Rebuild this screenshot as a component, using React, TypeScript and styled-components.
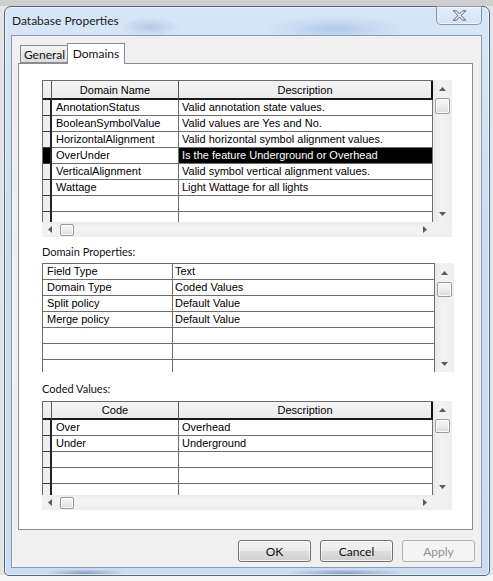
import React from "react";
import styled, { createGlobalStyle, css } from "styled-components";

const UI_FONT = `"Lato", "Liberation Sans", sans-serif`;
const GRID_FONT = `"Liberation Sans", Arial, sans-serif`;

const GlobalStyle = createGlobalStyle`
  html, body { margin: 0; padding: 0; }
  body {
    width: 493px;
    height: 581px;
    overflow: hidden;
    background: #e6e6e6;
  }
`;

/* ---------- desktop + window chrome ---------- */

const Desktop = styled.div`
  width: 493px;
  height: 581px;
  box-sizing: border-box;
  padding: 6px 0 0 4px;
  overflow: hidden;
  background: linear-gradient(
    180deg,
    #cfcfcf 0,
    #cfcfcf 6px,
    #e4e4e4 6px,
    #e4e4e4 575px,
    #f6f6f6 575px
  );
`;

const Window = styled.div`
  width: 486px;
  height: 570px;
  box-sizing: border-box;
  border: 1px solid #56657a;
  border-radius: 7px 7px 5px 5px;
  display: flex;
  flex-direction: column;
  box-shadow: inset 0 0 0 1px rgba(255, 255, 255, 0.55);
  background:
    radial-gradient(ellipse 70px 14px at 330px 22px, rgba(150, 180, 215, 0.55), transparent),
    radial-gradient(ellipse 30px 10px at 145px 20px, rgba(150, 175, 205, 0.5), transparent),
    radial-gradient(ellipse 40px 4px at 80px 566px, rgba(110, 135, 170, 0.7), transparent),
    radial-gradient(ellipse 60px 4px at 340px 566px, rgba(110, 135, 170, 0.7), transparent),
    linear-gradient(180deg, #d7e6f7 0%, #c8dbf1 45%, #cadcf1 100%);
`;

const TitleBar = styled.div`
  height: 28px;
  flex: none;
  display: flex;
  align-items: flex-start;
  padding-left: 7px;
`;

const Title = styled.span`
  font-family: ${UI_FONT};
  font-size: 12px;
  line-height: 28px;
  color: #1a1a1a;
`;

const CloseButton = styled.div`
  margin-left: auto;
  margin-right: 7px;
  margin-top: -1px;
  width: 46px;
  height: 19px;
  box-sizing: border-box;
  border: 1px solid #8296b2;
  border-top: none;
  border-radius: 0 0 5px 5px;
  background: linear-gradient(180deg, rgba(255, 255, 255, 0.35), rgba(210, 225, 245, 0.4));
  box-shadow: inset 0 -1px 0 rgba(255, 255, 255, 0.6);
  display: flex;
  align-items: center;
  justify-content: center;
`;

const ClientArea = styled.div`
  flex: 1;
  margin: 0 7px 7px 6px;
  box-sizing: border-box;
  border: 1px solid #8b9ab0;
  background: #f0f0f0;
  padding: 7px 8px 0 6px;
  display: flex;
  flex-direction: column;
`;

/* ---------- tabs ---------- */

const TabStrip = styled.div`
  height: 21px;
  display: flex;
  align-items: flex-end;
  padding-left: 2px;
  margin-bottom: -1px;
  position: relative;
  z-index: 1;
`;

const Tab = styled.div<{ $active?: boolean }>`
  box-sizing: border-box;
  border: 1px solid #898c95;
  font-family: ${UI_FONT};
  font-size: 12px;
  color: #111;
  display: flex;
  align-items: center;
  justify-content: center;
  ${(p) =>
    p.$active
      ? css`
          width: 58px;
          height: 21px;
          margin-left: -1px;
          border-bottom: none;
          background: #fff;
          padding-bottom: 2px;
        `
      : css`
          width: 48px;
          height: 18px;
          margin-bottom: 1px;
          border-right: none;
          background: linear-gradient(180deg, #f3f3f3 0%, #e9e9e9 50%, #dcdcdc 100%);
          padding-top: 1px;
        `}
`;

const Panel = styled.div`
  height: 467px;
  box-sizing: border-box;
  border: 1px solid #898c95;
  background: #fff;
  padding: 16px 0 0 23px;
  display: flex;
  flex-direction: column;
  align-items: flex-start;
`;

const SectionLabel = styled.div<{ $top: number; $bottom: number }>`
  font-family: ${UI_FONT};
  font-size: 11px;
  line-height: 16px;
  height: 16px;
  color: #111;
  margin-top: ${(p) => p.$top}px;
  margin-bottom: ${(p) => p.$bottom}px;
`;

/* ---------- data grid ---------- */

const GridFrame = styled.div<{ $w: number; $h: number; $hs: boolean }>`
  display: grid;
  grid-template-columns: ${(p) => p.$w}px 19px;
  grid-template-rows: ${(p) => p.$h}px ${(p) => (p.$hs ? "15px" : "0px")};
`;

const CellArea = styled.div`
  overflow: hidden;
  box-sizing: border-box;
  border-left: 1px solid #6a6a6a;
  border-top: 1px solid #6a6a6a;
  background: #fff;
`;

const Row = styled.div<{ $cols: string; $h: number }>`
  display: grid;
  grid-template-columns: ${(p) => p.$cols};
  height: ${(p) => p.$h}px;
`;

const Cell = styled.div<{ $sel?: boolean; $pad: number }>`
  box-sizing: border-box;
  border-right: 1px solid #6e6e6e;
  border-bottom: 1px solid #6e6e6e;
  padding-left: ${(p) => p.$pad}px;
  font-family: ${GRID_FONT};
  font-size: 11px;
  line-height: 15px;
  white-space: nowrap;
  overflow: hidden;
  color: ${(p) => (p.$sel ? "#fff" : "#000")};
  background: ${(p) => (p.$sel ? "#000" : "#fff")};
`;

const HeaderCell = styled.div<{ $last?: boolean }>`
  box-sizing: border-box;
  border-right: ${(p) => (p.$last ? "2px solid #111" : "1px solid #555")};
  border-bottom: 2px solid #1a1a1a;
  background: linear-gradient(180deg, #f4f4f4, #ececec);
  font-family: ${GRID_FONT};
  font-size: 11px;
  color: #000;
  display: flex;
  align-items: center;
  justify-content: center;
`;

const SelectorCell = styled.div<{ $sel?: boolean }>`
  box-sizing: border-box;
  border-right: 2px solid #222;
  border-bottom: 1px solid #3a3a3a;
  background: ${(p) => (p.$sel ? "#000" : "#efefef")};
`;

const VScroll = styled.div`
  background: linear-gradient(90deg, #e9e9e9, #f2f2f2 40%, #eeeeee);
  display: flex;
  flex-direction: column;
  align-items: center;
`;

const ArrowBox = styled.div<{ $h: number }>`
  height: ${(p) => p.$h}px;
  width: 100%;
  flex: none;
  display: flex;
  align-items: center;
  justify-content: center;
`;

const Thumb = styled.div<{ $w: number; $h: number; $offset?: number }>`
  width: ${(p) => p.$w}px;
  height: ${(p) => p.$h}px;
  margin-left: ${(p) => p.$offset ?? 0}px;
  flex: none;
  box-sizing: border-box;
  border: 1px solid #9a9a9a;
  border-radius: 2px;
  background: linear-gradient(180deg, #f7f7f7 0%, #ececec 50%, #dadada 100%);
  box-shadow: inset 0 0 0 1px rgba(255, 255, 255, 0.8);
`;

const Spacer = styled.div`
  flex: 1;
`;

const HScroll = styled.div`
  background: linear-gradient(180deg, #ececec, #f3f3f3 40%, #efefef);
  display: flex;
  align-items: center;
  padding: 0 4px 0 4px;
`;

const HArrowBox = styled.div`
  width: 8px;
  display: flex;
  justify-content: center;
`;

const Corner = styled.div`
  background: #f0f0f0;
`;

type Dir = "up" | "down" | "left" | "right";

const ARROW_POINTS: Record<Dir, string> = {
  up: "0,4 3.5,0 7,4",
  down: "0,0 7,0 3.5,4",
  left: "4,0 4,7 0,3.5",
  right: "0,0 4,3.5 0,7",
};

const Arrow: React.FC<{ dir: Dir }> = ({ dir }) => {
  const horizontal = dir === "left" || dir === "right";
  const w = horizontal ? 4 : 7;
  const h = horizontal ? 7 : 4;
  return (
    <svg width={w} height={h} viewBox={`0 0 ${w} ${h}`}>
      <polygon points={ARROW_POINTS[dir]} fill="#5a5a5a" />
    </svg>
  );
};

type GridProps = {
  columns: number[];
  pads: number[];
  header?: string[];
  headerHeight?: number;
  rows: string[][];
  selector?: boolean;
  selected?: number;
  height: number;
  hscroll?: boolean;
  upBox: number;
  thumbH: number;
};

const DataGrid: React.FC<GridProps> = ({
  columns,
  pads,
  header,
  headerHeight = 19,
  rows,
  selector,
  selected,
  height,
  hscroll = false,
  upBox,
  thumbH,
}) => {
  const widths = selector ? [9, ...columns] : columns;
  const tmpl = widths.map((w) => `${w}px`).join(" ");
  const areaW = widths.reduce((a, b) => a + b, 0) + 1;
  return (
    <GridFrame $w={areaW} $h={height} $hs={hscroll}>
      <CellArea>
        {header && (
          <Row $cols={tmpl} $h={headerHeight}>
            {selector && <HeaderCell />}
            {header.map((h, i) => (
              <HeaderCell key={i} $last={i === header.length - 1}>
                {h}
              </HeaderCell>
            ))}
          </Row>
        )}
        {rows.map((r, ri) => (
          <Row key={ri} $cols={tmpl} $h={16}>
            {selector && <SelectorCell $sel={ri === selected} />}
            {r.map((c, ci) => (
              <Cell key={ci} $pad={pads[ci]} $sel={ri === selected && ci === r.length - 1}>
                {c}
              </Cell>
            ))}
          </Row>
        ))}
      </CellArea>
      <VScroll>
        <ArrowBox $h={upBox}>
          <Arrow dir="up" />
        </ArrowBox>
        <Thumb $w={15} $h={thumbH} />
        <Spacer />
        <ArrowBox $h={16}>
          <Arrow dir="down" />
        </ArrowBox>
      </VScroll>
      {hscroll && (
        <>
          <HScroll>
            <HArrowBox>
              <Arrow dir="left" />
            </HArrowBox>
            <Thumb $w={14} $h={12} $offset={6} />
            <Spacer />
            <HArrowBox>
              <Arrow dir="right" />
            </HArrowBox>
          </HScroll>
          <Corner />
        </>
      )}
    </GridFrame>
  );
};

/* ---------- buttons ---------- */

const ButtonRow = styled.div`
  display: flex;
  justify-content: flex-end;
  gap: 9px;
  margin-top: 10px;
  margin-right: -2px;
`;

const Button = styled.button<{ $disabled?: boolean }>`
  width: 73px;
  height: 22px;
  box-sizing: border-box;
  padding: 0;
  border-radius: 3px;
  font-family: ${UI_FONT};
  font-size: 12px;
  ${(p) =>
    p.$disabled
      ? css`
          border: 1px solid #adb2b5;
          background: #f4f4f4;
          color: #8f8f8f;
        `
      : css`
          border: 1px solid #707070;
          color: #111;
          background: linear-gradient(180deg, #f2f2f2 0%, #ebebeb 48%, #dddddd 52%, #cfcfcf 100%);
          box-shadow: inset 0 0 0 1px rgba(255, 255, 255, 0.7);
        `}
`;

/* ---------- close glyph ---------- */

const CloseGlyph = () => (
  <svg width="15" height="11" viewBox="-1 -1 18 14">
    <polygon
      points="0,0 4,0 8,4 12,0 16,0 10,6 16,12 12,12 8,8 4,12 0,12 6,6"
      fill="#f4f7fb"
      stroke="#47536a"
      strokeWidth="1.2"
      strokeLinejoin="round"
    />
  </svg>
);

/* ---------- data ---------- */

const domains: string[][] = [
  ["AnnotationStatus", "Valid annotation state values."],
  ["BooleanSymbolValue", "Valid values are Yes and No."],
  ["HorizontalAlignment", "Valid horizontal symbol alignment values."],
  ["OverUnder", "Is the feature Underground or Overhead"],
  ["VerticalAlignment", "Valid symbol vertical alignment values."],
  ["Wattage", "Light Wattage for all lights"],
  ["", ""],
  ["", ""],
];

const domainProps: string[][] = [
  ["Field Type", "Text"],
  ["Domain Type", "Coded Values"],
  ["Split policy", "Default Value"],
  ["Merge policy", "Default Value"],
  ["", ""],
  ["", ""],
  ["", ""],
];

const codedValues: string[][] = [
  ["Over", "Overhead"],
  ["Under", "Underground"],
  ["", ""],
  ["", ""],
  ["", ""],
];

export default function App() {
  return (
    <>
      <GlobalStyle />
      <Desktop>
        <Window>
          <TitleBar>
            <Title>Database Properties</Title>
            <CloseButton>
              <CloseGlyph />
            </CloseButton>
          </TitleBar>
          <ClientArea>
            <TabStrip>
              <Tab>General</Tab>
              <Tab $active>Domains</Tab>
            </TabStrip>
            <Panel>
              <DataGrid
                columns={[127, 254]}
                pads={[4, 3]}
                header={["Domain Name", "Description"]}
                headerHeight={19}
                rows={domains}
                selector
                selected={3}
                height={142}
                hscroll
                upBox={18}
                thumbH={16}
              />
              <SectionLabel $top={7} $bottom={3}>
                Domain Properties:
              </SectionLabel>
              <DataGrid
                columns={[130, 262]}
                pads={[4, 2]}
                rows={domainProps}
                height={109}
                upBox={19}
                thumbH={15}
              />
              <SectionLabel $top={9} $bottom={4}>
                Coded Values:
              </SectionLabel>
              <DataGrid
                columns={[127, 254]}
                pads={[4, 3]}
                header={["Code", "Description"]}
                headerHeight={18}
                rows={codedValues}
                selector
                height={94}
                hscroll
                upBox={18}
                thumbH={14}
              />
            </Panel>
            <ButtonRow>
              <Button>OK</Button>
              <Button>Cancel</Button>
              <Button $disabled>Apply</Button>
            </ButtonRow>
          </ClientArea>
        </Window>
      </Desktop>
    </>
  );
}
